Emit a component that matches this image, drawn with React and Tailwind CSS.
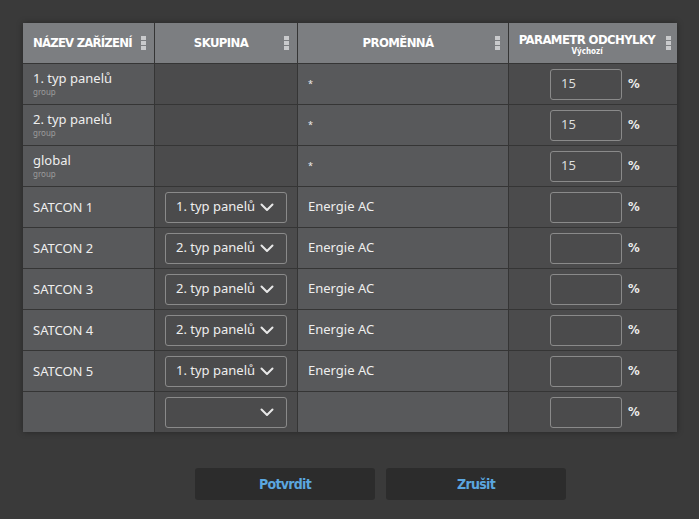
import React from 'react';

const Kebab = () => (
  <span className="flex flex-col gap-[1px]">
    <span className="w-[5px] h-[4px] bg-[#c9cacc]" />
    <span className="w-[5px] h-[4px] bg-[#c9cacc]" />
    <span className="w-[5px] h-[4px] bg-[#c9cacc]" />
  </span>
);

const Chevron = () => (
  <svg width="14" height="9" viewBox="0 0 14 9" fill="none">
    <path d="M1.5 1.5 L7 7 L12.5 1.5" stroke="#e8e8e8" strokeWidth="2" strokeLinecap="round" strokeLinejoin="round" />
  </svg>
);

const rows = [
  { name: '1. typ panelů', sub: 'group', group: null, variable: '*', value: '15' },
  { name: '2. typ panelů', sub: 'group', group: null, variable: '*', value: '15' },
  { name: 'global', sub: 'group', group: null, variable: '*', value: '15' },
  { name: 'SATCON 1', group: '1. typ panelů', variable: 'Energie AC', value: '' },
  { name: 'SATCON 2', group: '2. typ panelů', variable: 'Energie AC', value: '' },
  { name: 'SATCON 3', group: '2. typ panelů', variable: 'Energie AC', value: '' },
  { name: 'SATCON 4', group: '2. typ panelů', variable: 'Energie AC', value: '' },
  { name: 'SATCON 5', group: '1. typ panelů', variable: 'Energie AC', value: '' },
  { name: '', group: '', variable: '', value: '' },
];

const narrow = { fontFamily: '"DejaVu Sans Condensed", "Roboto Condensed", Roboto, sans-serif', fontStretch: 'condensed' };

export default function App() {
  return (
    <div className="w-[699px] h-[519px] bg-[#3a3a3a] pt-[23px] pl-[23px] text-[#eeeeee]" style={{ fontFamily: '"Noto Sans", sans-serif' }}>
      <div className="w-[654px] grid grid-cols-[131px_142px_210px_168px] gap-px bg-[#353535] shadow-[0_0_6px_rgba(0,0,0,0.35)]">
        {/* header */}
        <div className="h-[40px] bg-[#7c7e81] flex items-center justify-between pl-[10px] pr-[8px] font-bold text-[13px] tracking-[-0.8px] whitespace-nowrap text-white" style={narrow}>
          <span>NÁZEV ZAŘÍZENÍ</span>
          <Kebab />
        </div>
        <div className="h-[40px] bg-[#7c7e81] flex items-center relative font-bold text-[13px] tracking-[-0.6px] whitespace-nowrap text-white" style={narrow}>
          <span className="flex-1 text-center pr-[10px]">SKUPINA</span>
          <span className="absolute right-[8px] top-[13px]"><Kebab /></span>
        </div>
        <div className="h-[40px] bg-[#7c7e81] flex items-center relative font-bold text-[13px] tracking-[-0.6px] whitespace-nowrap text-white" style={narrow}>
          <span className="flex-1 text-center pr-[10px]">PROMĚNNÁ</span>
          <span className="absolute right-[8px] top-[13px]"><Kebab /></span>
        </div>
        <div className="h-[40px] bg-[#7c7e81] flex items-center relative text-white whitespace-nowrap" style={narrow}>
          <div className="flex-1 flex flex-col items-center pr-[12px] pt-[3px]">
            <span className="font-bold text-[13px] tracking-[-0.6px] leading-[15px]">PARAMETR ODCHYLKY</span>
            <span className="font-bold text-[8px] leading-[10px]">Výchozí</span>
          </div>
          <span className="absolute right-[6px] top-[13px]"><Kebab /></span>
        </div>

        {rows.map((r, i) => (
          <React.Fragment key={i}>
            <div className="h-[40px] bg-[#58595b] flex flex-col justify-center pl-[10px] text-[13px]">
              <span className="leading-[16px]">{r.name}</span>
              {r.sub && <span className="text-[8px] leading-[12px] text-[#9c9c9c]">{r.sub}</span>}
            </div>
            <div className="h-[40px] bg-[#4b4b4c] flex items-center pl-[10px]">
              {r.group !== null && (
                <div className="w-[122px] h-[31px] border border-[#8a8a8a] rounded-[3px] flex items-center justify-between pl-[10px] pr-[12px] text-[13px]">
                  <span>{r.group}</span>
                  <Chevron />
                </div>
              )}
            </div>
            <div className="h-[40px] bg-[#58595b] flex items-center pl-[10px] text-[13px]">
              {r.variable === '*' ? <span className="text-[9px]">*</span> : r.variable}
            </div>
            <div className="h-[40px] bg-[#4b4b4c] flex items-center pl-[41px] gap-[6px]">
              <div className="w-[72px] h-[31px] border border-[#8a8a8a] rounded-[3px] flex items-center pl-[10px] text-[13px] text-[#dddddd]">
                {r.value}
              </div>
              <span className="text-[13px] font-bold" style={narrow}>%</span>
            </div>
          </React.Fragment>
        ))}
      </div>

      <div className="flex gap-[11px] pl-[172px] mt-[36px]">
        <button className="w-[180px] h-[32px] bg-[#2c2c2c] rounded-[3px] text-[#5ba6df] font-bold text-[14px] tracking-[-0.7px]" style={narrow}>Potvrdit</button>
        <button className="w-[180px] h-[32px] bg-[#2c2c2c] rounded-[3px] text-[#5ba6df] font-bold text-[14px] tracking-[-0.7px]" style={narrow}>Zrušit</button>
      </div>
    </div>
  );
}
